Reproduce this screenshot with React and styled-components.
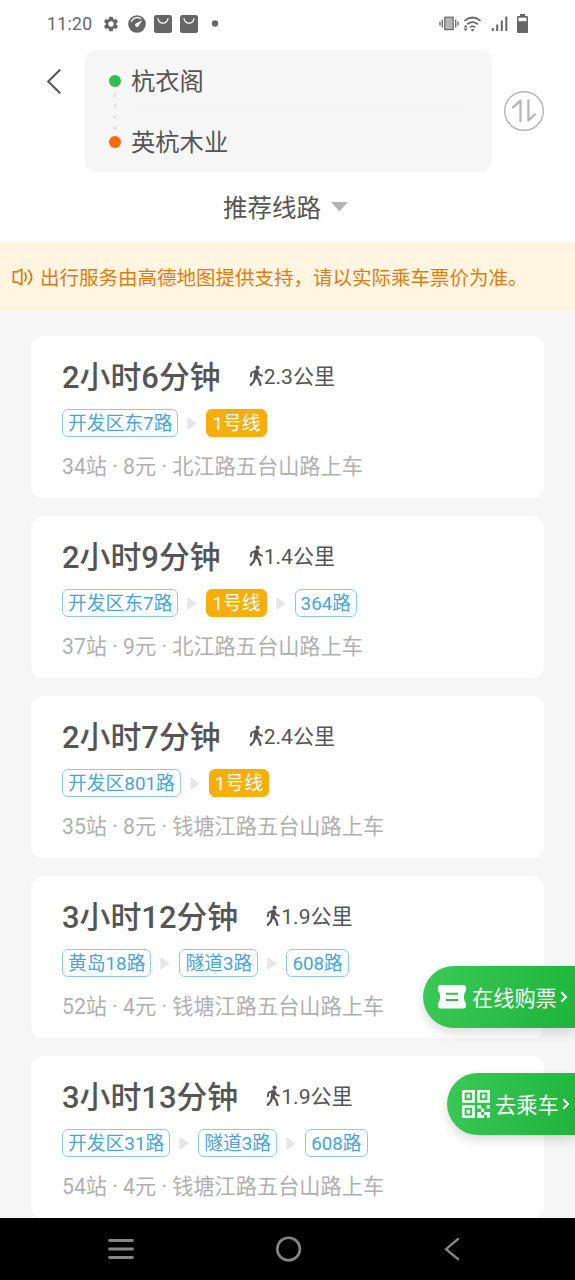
import React from "react";
import styled, { createGlobalStyle } from "styled-components";
import { MdSettings } from "react-icons/md";

const GlobalStyle = createGlobalStyle`
* { box-sizing: border-box; }
body {
  margin: 0;
  background: #ffffff;
  font-family: Roboto, "Noto Sans CJK SC", sans-serif;
  color: #555555;
}
svg { display: block; flex: none; }
`
const Phone = styled.div`
position: relative;
display: flex;
flex-direction: column;
width: 575px;
height: 1280px;
overflow: hidden;
background: #ffffff;
`
const StatusBar = styled.div`
display: flex;
flex: none;
align-items: center;
justify-content: space-between;
height: 50px;
padding: 0 47px 3px;
color: #666666;
`
const StatusGroup = styled.div`
display: flex;
align-items: center;
gap: ${props => props.$gap}px;
`
const Clock = styled.span`
width: 47px;
font-size: 17.5px;
letter-spacing: 0.4px;
`
const Header = styled.header`
display: flex;
flex: none;
height: 122px;
`
const BackButton = styled.button`
width: 85px;
padding: 18px 0 0 46px;
border: 0;
background: none;
display: flex;
`
const PlaceBox = styled.div`
width: 407px;
padding: 11px 24px 0;
border-radius: 12px;
background: #f6f6f6;
`
const Place = styled.div`
display: flex;
align-items: center;
gap: 10px;
height: 40px;
font-size: 24.3px;
line-height: 38px;
span { padding-top: 2px; }
`
const Dot = styled.i`
width: 12px;
height: 12px;
border-radius: 50%;
background: ${props => props.$color};
`
const Connector = styled.div`
display: flex;
align-items: center;
gap: 10px;
height: 21px;
`
const DotColumn = styled.div`
display: flex;
flex-direction: column;
align-items: center;
gap: 7px;
width: 12px;
span {
  width: 4px;
  height: 4px;
  border-radius: 50%;
  background: #e4e4e4;
}
`
const Divider = styled.div`
flex: 1;
height: 1px;
background: #f4f4f4;
`
const SwapButton = styled.button`
display: flex;
align-items: center;
padding: 0 0 0 12px;
border: 0;
background: none;
`
const Filter = styled.div`
display: flex;
flex: none;
align-items: center;
gap: 10px;
height: 70px;
padding: 0 0 0 223px;
font-size: 24.5px;
line-height: 36px;
span { padding-top: 3px; }
`
const Notice = styled.div`
display: flex;
flex: none;
align-items: center;
gap: 6px;
height: 70px;
padding: 0 0 0 12px;
background: #fff5e1;
color: #dd7d10;
font-size: 19.5px;
white-space: nowrap;
span { padding-bottom: 2px; }
`
const RouteList = styled.main`
flex: 1;
min-height: 0;
overflow: hidden;
display: flex;
flex-direction: column;
gap: 18px;
padding: 24px 31px 0;
background: #f6f6f6;
`
const Card = styled.section`
flex: none;
height: 162px;
padding: 21px 31px 0;
border-radius: 12px;
background: #ffffff;
`
const CardTop = styled.div`
display: flex;
align-items: center;
gap: 28px;
height: 40px;
`
const Duration = styled.h2`
margin: 0;
padding-top: 1px;
font-size: 30.9px;
font-weight: 500;
line-height: 39px;
`
const Walk = styled.span`
display: flex;
align-items: center;
font-size: 21.1px;
line-height: 40px;
`
const Lines = styled.div`
display: flex;
align-items: center;
gap: 9px;
margin-top: 12px;
`
const LineTag = styled.span`
height: 28px;
padding: 0 5px;
border: 1px solid ${props => props.$metro ? "#f6ae0a" : "#8ec9e8"};
border-radius: 6px;
background: ${props => props.$metro ? "#f6ae0a" : "#ffffff"};
color: ${props => props.$metro ? "#ffffff" : "#4ba3d9"};
font-size: 18.8px;
line-height: 29px;
white-space: nowrap;
`
const Detail = styled.p`
margin: 15px 0 0;
color: #b0b0b0;
font-size: 21.2px;
line-height: 30px;
white-space: nowrap;
`
const FloatButton = styled.button`
position: absolute;
top: ${props => props.$top}px;
right: 0;
display: flex;
align-items: center;
width: ${props => props.$width}px;
height: 62px;
padding: 0 0 0 15px;
border: 0;
border-radius: 31px 0 0 31px;
background: linear-gradient(110deg, #3bc957, #1eb43b);
box-shadow: 0 5px 12px rgba(0, 0, 0, 0.14);
color: #ffffff;
font-family: inherit;
font-size: 21.2px;
white-space: nowrap;
span { padding: 0 3px 2px 5px; }
`
const NavBar = styled.nav`
display: flex;
flex: none;
align-items: center;
justify-content: space-between;
height: 62px;
padding: 0 115px 0 108px;
background: #000000;
`

const GaugeIcon = () => (
  <svg width="18" height="18" viewBox="0 0 18 18">
    <circle cx="9" cy="9" r="8.8" fill="#666" />
    <path d="M3.2 7.2a6.3 6.3 0 0 1 10-3.3" fill="none" stroke="#fff" strokeWidth="1.3" />
    <path d="M14.2 5.2 10.6 11a1.9 1.9 0 1 1-2.7-2.6z" fill="#fff" />
  </svg>
)
const BagIcon = () => (
  <svg width="18" height="18" viewBox="0 0 18 18">
    <rect width="18" height="18" rx="2.5" fill="#666" />
    <path d="M4 3.2a5 5 0 0 0 10 0" fill="none" stroke="#fff" strokeWidth="1.3" />
  </svg>
)
const VibrateIcon = () => (
  <svg width="20" height="15" viewBox="0 0 20 15">
    <rect x="5.8" y="1.2" width="8.4" height="12.4" fill="#b5b5b5" stroke="#666" strokeWidth="1.2" />
    <path d="M3.3 3.5v8M1 5.5v4M16.7 3.5v8M19 5.5v4" stroke="#666" strokeWidth="1.3" />
  </svg>
)
const WifiIcon = () => (
  <svg width="19" height="16" viewBox="0 0 19 16">
    <path d="M1.4 4.9Q9.5-1.9 17.6 4.9M4.2 8.2q5.3-4 10.6 0M6.9 11.2q2.6-1.9 5.2 0" fill="none" stroke="#666" strokeWidth="1.7" />
    <circle cx="9.5" cy="14" r="1.3" fill="#666" />
    <path d="M.8 11.5 2.7 8.8l1.9 2.7zM.8 12.6l1.9 2.7 1.9-2.7z" fill="#666" />
  </svg>
)
const SignalIcon = () => (
  <svg width="17" height="16" viewBox="0 0 17 16">
    <path d="M1.8 12v3M6.2 8.5V15M10.8 4.5V15M15.3.5V15" stroke="#666" strokeWidth="2" />
  </svg>
)
const BatteryIcon = () => (
  <svg width="11" height="19" viewBox="0 0 11 19">
    <path d="M3 0h5v2h2q1 0 1 1v15q0 1-1 1H1q-1 0-1-1V3q0-1 1-1h2z" fill="#666" />
    <path d="M1.5 3.7h8v3.5h-8z" fill="#fff" />
  </svg>
)
const BackIcon = () => (
  <svg width="16" height="26" viewBox="0 0 16 26">
    <path d="M14.2 1.5 2.2 13.5l12 11.7" fill="none" stroke="#555" strokeWidth="2" />
  </svg>
)
const SwapIcon = () => (
  <svg width="40" height="40" viewBox="0 0 40 40" fill="none" stroke="#b4b4b4">
    <circle cx="20" cy="20" r="19.3" strokeWidth="1.4" />
    <path d="M9 16.3l7.5-6.6v20.5M24.4 9.4v20l6.6-6" strokeWidth="2.2" strokeLinecap="round" strokeLinejoin="round" />
  </svg>
)
const CaretIcon = () => (
  <svg width="17" height="10" viewBox="0 0 17 10">
    <path d="M0 0h17L8.5 9.5z" fill="#b4b4b4" />
  </svg>
)
const SpeakerIcon = () => (
  <svg width="22" height="18" viewBox="0 0 22 18" fill="none" stroke="#dd7d10" strokeWidth="1.7">
    <path d="M1.4 3.8h3.9L9.7 1.3v15.4L5.3 14.2H1.4z" strokeLinejoin="round" />
    <path d="M12.6 4.6q3.2 4.4 0 8.8M15.9 1.5q7.4 7.5 0 15" />
  </svg>
)
const WalkIcon = () => (
  <svg width="15" height="24" viewBox="0 0 15 24" fill="none" stroke="#555" strokeLinecap="round" strokeLinejoin="round">
    <circle cx="8.6" cy="2.6" r="2.1" fill="#555" stroke="none" />
    <path d="M7.5 6.6 6.7 12" strokeWidth="4.2" />
    <path d="M6.4 6.1 2.5 7.7 1.8 11.4M8.6 6.6l1.6 3 2.7 1" strokeWidth="1.9" />
    <path d="M6 12.8 4.8 16.4l-3 3.4M7.6 12.2l2.5 3.2 1.3 4.4" strokeWidth="2.3" />
  </svg>
)
const ArrowIcon = () => (
  <svg width="10" height="13" viewBox="0 0 10 13">
    <path d="M1 1.2 8.7 6.5 1 11.8z" fill="#e6e6e6" stroke="#e6e6e6" strokeWidth="1.4" strokeLinejoin="round" />
  </svg>
)
const TicketIcon = () => (
  <svg width="29" height="24" viewBox="0 0 29 24">
    <path d="M2.5 0h23Q28 0 28 2.5V6q-2 1.6-2 6t2 6v2.8q0 2.7-2.5 2.7h-23Q0 23.5 0 20.8V18q2-1.6 2-6T0 6V2.5Q0 0 2.5 0z" fill="#fff" />
    <path d="M8 8.7h12M8 15h12" stroke="#2fbe4b" strokeWidth="2" />
  </svg>
)
const QrIcon = () => (
  <svg width="28" height="28" viewBox="0 0 28 28">
    <g fill="none" stroke="#fff" strokeWidth="2.6">
      <path d="M1.3 1.3h10.2v10.2H1.3zM16.5 1.3h10.2v10.2H16.5zM1.3 16.5h10.2v10.2H1.3z" />
    </g>
    <path d="M4.6 4.6h3.6v3.6H4.6zM19.8 4.6h3.6v3.6h-3.6zM4.6 19.8h3.6v3.6H4.6zM15.2 15.2h4v3.4h3V22h-3v-3.4h-4zM24.6 15.2H28v3.4h-3.4zM15.2 22h4v3h3v3h-7zM22.2 22H28v6h-3v-3h-2.8z" fill="#fff" />
  </svg>
)
const ChevronIcon = () => (
  <svg width="8" height="12" viewBox="0 0 8 12">
    <path d="M1.3 1.2 6 6l-4.7 4.8" fill="none" stroke="#fff" strokeWidth="2" />
  </svg>
)

const routes = [
  {
    time: "2小时6分钟", walk: "2.3公里", detail: "34站 · 8元 · 北江路五台山路上车",
    lines: ["开发区东7路", "1号线"],
  },
  {
    time: "2小时9分钟", walk: "1.4公里", detail: "37站 · 9元 · 北江路五台山路上车",
    lines: ["开发区东7路", "1号线", "364路"],
  },
  {
    time: "2小时7分钟", walk: "2.4公里", detail: "35站 · 8元 · 钱塘江路五台山路上车",
    lines: ["开发区801路", "1号线"],
  },
  {
    time: "3小时12分钟", walk: "1.9公里", detail: "52站 · 4元 · 钱塘江路五台山路上车",
    lines: ["黄岛18路", "隧道3路", "608路"],
  },
  {
    time: "3小时13分钟", walk: "1.9公里", detail: "54站 · 4元 · 钱塘江路五台山路上车",
    lines: ["开发区31路", "隧道3路", "608路"],
  },
]

const RouteCard = ({ route }) => (
  <Card>
    <CardTop>
      <Duration>{route.time}</Duration>
      <Walk><WalkIcon /><span>{route.walk}</span></Walk>
    </CardTop>
    <Lines>
      {route.lines.map((line, i) => (
        <React.Fragment key={line}>
          {i > 0 && <ArrowIcon />}
          <LineTag $metro={line.endsWith("号线")}>{line}</LineTag>
        </React.Fragment>
      ))}
    </Lines>
    <Detail>{route.detail}</Detail>
  </Card>
)

const App = () => {
  return (<Phone>
    <GlobalStyle />
    <StatusBar>
      <StatusGroup $gap={8}>
        <Clock>11:20</Clock>
        <MdSettings size={18} />
        <GaugeIcon />
        <BagIcon />
        <BagIcon />
        <svg width="20" height="7" viewBox="0 0 20 7"><circle cx="9" cy="3.5" r="3.2" fill="#666" /></svg>
      </StatusGroup>
      <StatusGroup $gap={9}>
        <StatusGroup $gap={4}>
          <VibrateIcon />
          <WifiIcon />
        </StatusGroup>
        <SignalIcon />
        <BatteryIcon />
      </StatusGroup>
    </StatusBar>
    <Header>
      <BackButton><BackIcon /></BackButton>
      <PlaceBox>
        <Place><Dot $color="#2fbe4f" /><span>杭衣阁</span></Place>
        <Connector>
          <DotColumn><span /><span /><span /><span /></DotColumn>
          <Divider />
        </Connector>
        <Place><Dot $color="#fa6a0a" /><span>英杭木业</span></Place>
      </PlaceBox>
      <SwapButton><SwapIcon /></SwapButton>
    </Header>
    <Filter><span>推荐线路</span><CaretIcon /></Filter>
    <Notice><SpeakerIcon /><span>出行服务由高德地图提供支持，请以实际乘车票价为准。</span></Notice>
    <RouteList>
      {routes.map(route => <RouteCard key={route.time} route={route} />)}
    </RouteList>
    <FloatButton $top={966} $width={152}>
      <TicketIcon /><span>在线购票</span><ChevronIcon />
    </FloatButton>
    <FloatButton $top={1073} $width={128}>
      <QrIcon /><span>去乘车</span><ChevronIcon />
    </FloatButton>
    <NavBar>
      <svg width="26" height="22" viewBox="0 0 26 22">
        <path d="M1.5 2.5h23M1.5 11h23M1.5 19.5h23" stroke="#858585" strokeWidth="2.8" strokeLinecap="round" />
      </svg>
      <svg width="26" height="26" viewBox="0 0 26 26">
        <circle cx="12.6" cy="13" r="11.3" fill="none" stroke="#858585" strokeWidth="2.6" />
      </svg>
      <svg width="16" height="24" viewBox="0 0 16 24">
        <path d="M14 2 2 12.2 14 22.2" fill="none" stroke="#858585" strokeWidth="2.4" strokeLinecap="round" />
      </svg>
    </NavBar>
  </Phone>);
};

export default App;
